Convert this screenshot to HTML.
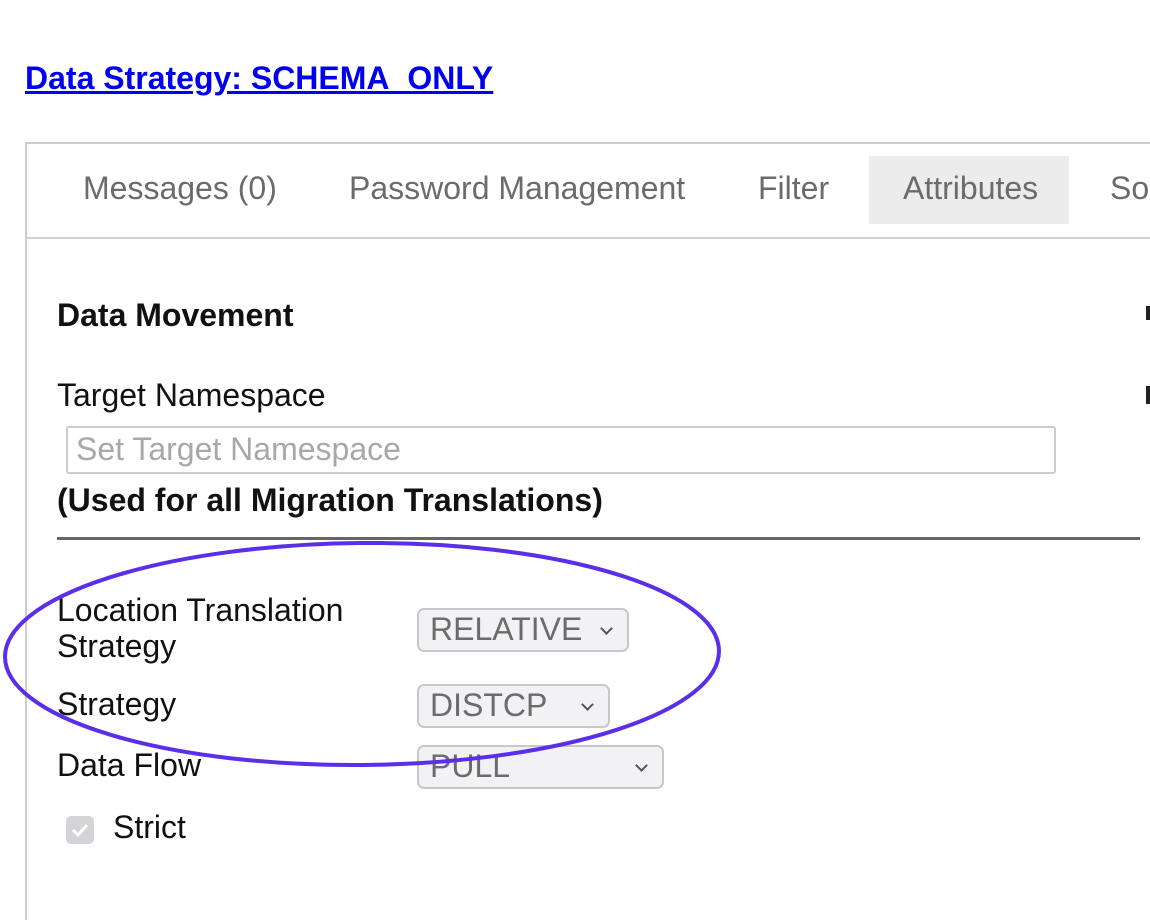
<!DOCTYPE html>
<html><head><style>
body{margin:0;width:1150px;height:920px;overflow:hidden;background:#fff;font-family:"Liberation Sans",Arial,sans-serif;position:relative}
.a{position:absolute;white-space:nowrap}
.tab{position:absolute;top:170px;font-size:32px;color:#6b6b6b;line-height:36px}
.sel{position:absolute;background:#f2f2f4;border:2px solid #c8c8cc;border-radius:7px;box-sizing:border-box;height:44px;font-size:32px;color:#6b6b6b;line-height:38px;padding-left:11px}
.chev{position:absolute;right:16px;top:14px;width:7px;height:7px;border-right:2px solid #555;border-bottom:2px solid #555;transform:rotate(45deg)}
.lbl{position:absolute;font-size:32px;color:#111;line-height:36px}
</style></head><body>
<div class="a" style="left:25px;top:60px;font-size:32px;font-weight:bold;color:#0000ee;text-decoration:underline;line-height:36px">Data Strategy: SCHEMA_ONLY</div>
<div class="a" style="left:25px;top:142px;width:1125px;height:2px;background:#ccc"></div>
<div class="a" style="left:25px;top:142px;width:2px;height:778px;background:#ccc"></div>
<div class="a" style="left:25px;top:237px;width:1125px;height:2px;background:#d0d0d0"></div>
<div class="a" style="left:869px;top:156px;width:200px;height:68px;background:#ececec"></div>
<div class="tab" style="left:83px">Messages (0)</div>
<div class="tab" style="left:349px">Password Management</div>
<div class="tab" style="left:758px">Filter</div>
<div class="tab" style="left:903px">Attributes</div>
<div class="tab" style="left:1110px">So</div>
<div class="lbl" style="left:57px;top:297px;font-weight:bold">Data Movement</div>
<div class="lbl" style="left:57px;top:377px">Target Namespace</div>
<div class="a" style="left:66px;top:426px;width:990px;height:48px;border:2px solid #ccc;border-radius:3px;box-sizing:border-box;font-size:32px;color:#a8a8a8;line-height:42px;padding-left:8px">Set Target Namespace</div>
<div class="lbl" style="left:57px;top:482px;font-weight:bold">(Used for all Migration Translations)</div>
<div class="a" style="left:57px;top:537px;width:1083px;height:3px;background:#666"></div>
<div class="lbl" style="left:57px;top:592px">Location Translation<br>Strategy</div>
<div class="lbl" style="left:57px;top:686px">Strategy</div>
<div class="lbl" style="left:57px;top:747px">Data Flow</div>
<div class="sel" style="left:417px;top:608px;width:212px">RELATIVE<span class="chev"></span></div>
<div class="sel" style="left:417px;top:684px;width:193px">DISTCP<span class="chev"></span></div>
<div class="sel" style="left:417px;top:745px;width:247px">PULL<span class="chev"></span></div>
<div class="a" style="left:66px;top:816px;width:28px;height:28px;background:#d4d4d8;border-radius:5px"></div>
<svg class="a" style="left:66px;top:816px" width="28" height="28"><path d="M7 14l5 5 9-10" stroke="#fff" stroke-width="3" fill="none"/></svg>
<div class="lbl" style="left:113px;top:809px">Strict</div>
<div class="a" style="left:1146px;top:306px;width:4px;height:14px;background:#222"></div>
<div class="a" style="left:1146px;top:386px;width:4px;height:18px;background:#222"></div>
<svg class="a" style="left:0;top:0" width="1150" height="920"><ellipse cx="362" cy="654" rx="357" ry="111" transform="rotate(-0.5 362 654)" fill="none" stroke="#5b2ee8" stroke-width="4"/></svg>
</body></html>
